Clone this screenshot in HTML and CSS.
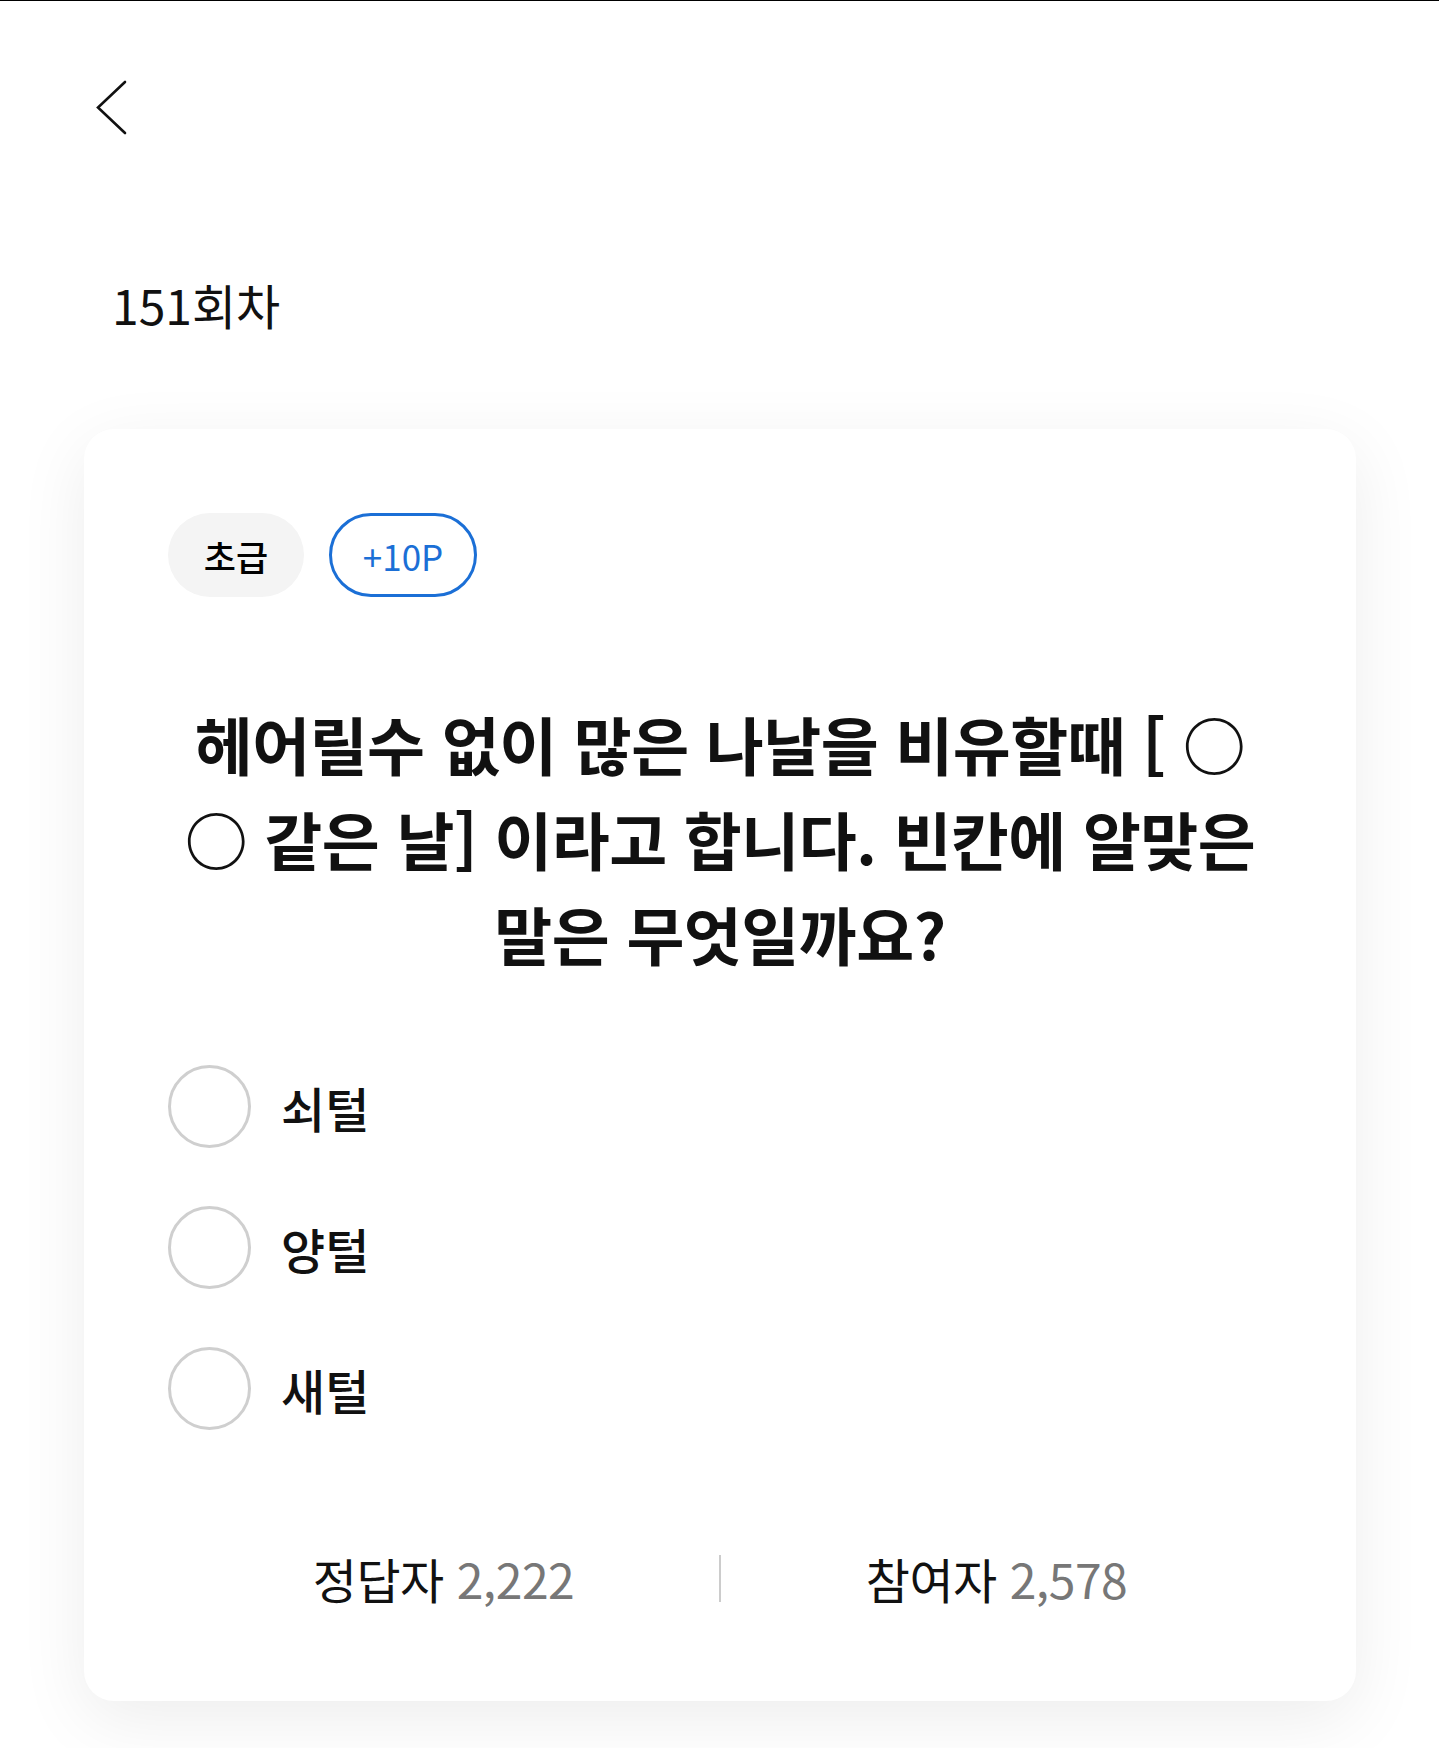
FILE: index.html
```html
<!DOCTYPE html>
<html lang="ko">
<head>
<meta charset="utf-8">
<title>151회차 퀴즈</title>
<link rel="stylesheet" href="styles.css">
</head>
<body>
<div class="topline"></div>
<div class="back" aria-label="뒤로">
  <svg width="32" height="56" viewBox="0 0 32 56"><path d="M30 2 L3 27.5 L30 53" fill="none" stroke="#111" stroke-width="2.6" stroke-linecap="round" stroke-linejoin="miter"/></svg>
</div>
<h1 class="title">151회차</h1>
<main class="card">
  <div class="tags">
    <span class="tag tag-level">초급</span>
    <span class="tag tag-point">+10P</span>
  </div>
  <p class="question">헤어릴수 없이 많은 나날을 비유할때 [ ○<br>○ 같은 날] 이라고 합니다. 빈칸에 알맞은<br>말은 무엇일까요?</p>
  <ul class="options">
    <li class="option"><span class="radio"></span><span class="label">쇠털</span></li>
    <li class="option"><span class="radio"></span><span class="label">양털</span></li>
    <li class="option"><span class="radio"></span><span class="label">새털</span></li>
  </ul>
  <div class="stats">
    <div class="stat"><span class="stat-label">정답자</span> <span class="stat-num">2,222</span></div>
    <div class="divider"></div>
    <div class="stat"><span class="stat-label">참여자</span> <span class="stat-num">2,578</span></div>
  </div>
</main>
</body>
</html>
```
FILE: styles.css
```css
html, body {
  margin: 0;
  padding: 0;
  background: #ffffff;
}
body {
  font-family: "Noto Sans CJK KR", "Noto Sans", sans-serif;
  color: #111;
  min-height: 1748px;
  overflow: hidden;
}
.topline {
  height: 1px;
  background: #000;
}
.back {
  margin: 79px 0 0 95px;
  height: 56px;
  width: 32px;
}
.back svg { display: block; }
.title {
  margin: 133px 0 0 112px;
  font-size: 48px;
  font-weight: 400;
  line-height: 70px;
  letter-spacing: 0;
  color: #111;
}
.card {
  margin: 90px 0 0 84px;
  width: 1272px;
  box-sizing: border-box;
  padding: 84px 84px 93px;
  background: #fff;
  border-radius: 30px;
  box-shadow: 0 18px 70px rgba(0, 0, 0, 0.075);
}
.tags {
  display: flex;
  gap: 25px;
  height: 84px;
}
.tag {
  display: flex;
  align-items: center;
  justify-content: center;
  box-sizing: border-box;
  height: 84px;
  border-radius: 42px;
  font-size: 35px;
  line-height: 1;
}
.tag-level {
  width: 136px;
  background: #f4f4f4;
  color: #000;
  font-weight: 500;
}
.tag-point {
  width: 148px;
  border: 3px solid #1b6fd6;
  color: #1b6fd6;
}
.question {
  margin: 98px -60px 0;
  text-align: center;
  white-space: nowrap;
  font-size: 63px;
  font-weight: 700;
  line-height: 95px;
  letter-spacing: -0.5px;
  color: #111;
}
.options {
  list-style: none;
  margin: 85px 0 0;
  padding: 0;
  display: flex;
  flex-direction: column;
  gap: 58px;
}
.option {
  display: flex;
  align-items: center;
  gap: 30px;
  height: 83px;
}
.radio {
  width: 83px;
  height: 83px;
  box-sizing: border-box;
  border: 3px solid #cfcfcf;
  border-radius: 50%;
  flex: none;
}
.label {
  font-size: 48px;
  font-weight: 500;
  color: #111;
}
.stats {
  margin-top: 118px;
  height: 60px;
  display: flex;
  align-items: center;
}
.stat {
  flex: 1;
  text-align: center;
  font-size: 48px;
  line-height: 60px;
  letter-spacing: -0.5px;
}
.stat-label { color: #111; }
.stat-num { color: #777; }
.divider {
  width: 2px;
  height: 47px;
  background: #cccccc;
  flex: none;
}
```
